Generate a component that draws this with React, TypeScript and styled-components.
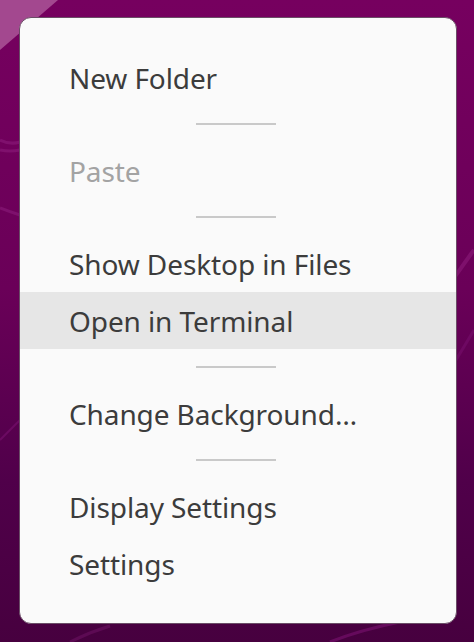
import styled, { createGlobalStyle } from "styled-components";

const GlobalStyle = createGlobalStyle`
  html, body {
    margin: 0;
    padding: 0;
  }
  body {
    font-family: "Noto Sans", "DejaVu Sans", sans-serif;
  }
`;

const Desktop = styled.div`
  position: relative;
  width: 474px;
  height: 642px;
  overflow: hidden;
  padding: 17px 0 0 19px;
  box-sizing: border-box;
  background: linear-gradient(180deg, #76005f 0%, #6a0058 45%, #50004a 75%, #47003f 100%);
`;

const Wallpaper = styled.svg`
  position: absolute;
  inset: 0;
  width: 474px;
  height: 642px;
`;

const Menu = styled.div`
  position: relative;
  width: 438px;
  height: 607px;
  box-sizing: border-box;
  padding: 31px 0;
  background: #fafafa;
  border: 1px solid #6a4d66;
  border-radius: 12px;
  display: flex;
  flex-direction: column;
  overflow: hidden;
`;

const Item = styled.div<{ $disabled?: boolean; $hover?: boolean }>`
  height: 57px;
  flex-shrink: 0;
  display: flex;
  align-items: center;
  padding-left: 49px;
  font-size: 28px;
  letter-spacing: -0.1px;
  color: ${(p) => (p.$disabled ? "#a3a3a3" : "#3c3c3c")};
  background: ${(p) => (p.$hover ? "#e6e6e6" : "transparent")};
`;

const Separator = styled.div`
  height: 36px;
  flex-shrink: 0;
  display: flex;
  align-items: center;
  justify-content: center;
  padding-right: 5px;

  &::after {
    content: "";
    width: 80px;
    height: 2px;
    background: #c9c9c9;
  }
`;

export default function App() {
  return (
    <>
      <GlobalStyle />
      <Desktop>
        <Wallpaper viewBox="0 0 474 642">
          <path d="M0 0 L58 0 L0 50 Z" fill="#a3488f" />
          <path d="M474 250 Q455 275 440 300" stroke="#8a1a7a" strokeWidth="4" fill="none" opacity="0.6" />
          <path d="M474 330 Q462 350 450 370" stroke="#7a1070" strokeWidth="3" fill="none" opacity="0.5" />
          <path d="M0 140 Q10 145 20 142" stroke="#8a1a7a" strokeWidth="3" fill="none" opacity="0.6" />
          <path d="M0 150 Q10 152 20 150" stroke="#8a1a7a" strokeWidth="3" fill="none" opacity="0.6" />
          <path d="M0 208 Q10 212 20 215" stroke="#8a1a7a" strokeWidth="3" fill="none" opacity="0.6" />
          <path d="M0 440 Q10 430 20 420" stroke="#7a1070" strokeWidth="2" fill="none" opacity="0.6" />
          <path d="M330 642 Q360 630 400 622" stroke="#7a1070" strokeWidth="3" fill="none" opacity="0.6" />
          <path d="M70 642 Q90 632 110 626" stroke="#6a1060" strokeWidth="3" fill="none" opacity="0.6" />
        </Wallpaper>
        <Menu>
          <Item>New Folder</Item>
          <Separator />
          <Item $disabled>Paste</Item>
          <Separator />
          <Item>Show Desktop in Files</Item>
          <Item $hover>Open in Terminal</Item>
          <Separator />
          <Item>Change Background…</Item>
          <Separator />
          <Item>Display Settings</Item>
          <Item>Settings</Item>
        </Menu>
      </Desktop>
    </>
  );
}
